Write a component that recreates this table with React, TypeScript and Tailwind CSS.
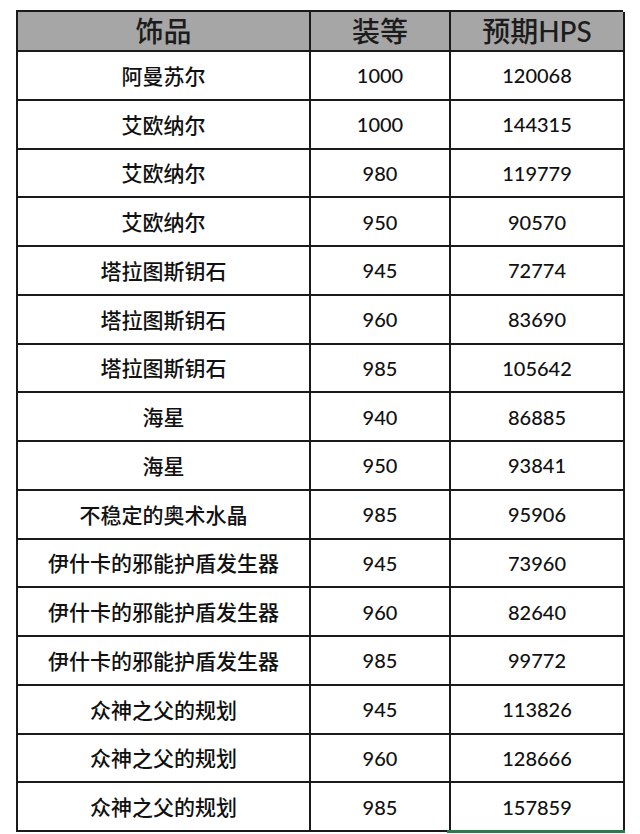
import React from "react";

const ROWS: [string, string, string][] = [
  ["阿曼苏尔", "1000", "120068"],
  ["艾欧纳尔", "1000", "144315"],
  ["艾欧纳尔", "980", "119779"],
  ["艾欧纳尔", "950", "90570"],
  ["塔拉图斯钥石", "945", "72774"],
  ["塔拉图斯钥石", "960", "83690"],
  ["塔拉图斯钥石", "985", "105642"],
  ["海星", "940", "86885"],
  ["海星", "950", "93841"],
  ["不稳定的奥术水晶", "985", "95906"],
  ["伊什卡的邪能护盾发生器", "945", "73960"],
  ["伊什卡的邪能护盾发生器", "960", "82640"],
  ["伊什卡的邪能护盾发生器", "985", "99772"],
  ["众神之父的规划", "945", "113826"],
  ["众神之父的规划", "960", "128666"],
  ["众神之父的规划", "985", "157859"],
];

const font = "font-['Lato','Noto_Sans_CJK_SC',sans-serif]";

export default function App() {
  return (
    <div className={`w-[640px] h-[834px] bg-white pt-[10px] pl-[16px] ${font} text-[#111]`}>
      <div className="relative w-[607px]">
        <div className="grid grid-cols-[293px_140px_174px] border-t-2 border-l-2 border-[#1a1a1a]">
          {["饰品", "装等", "预期HPS"].map(h => (
            <div key={h} className="h-[40px] bg-[#a6a6a6] border-r-2 border-b-2 border-[#1a1a1a] flex items-center justify-center text-[28px] leading-none font-medium text-[#1c1c1c]">
              {h}
            </div>
          ))}
          {ROWS.map((r, i) => (
            <React.Fragment key={i}>
              <div className="h-[48.75px] border-r-2 border-b-2 border-[#1a1a1a] flex items-center justify-center text-[21px] leading-none font-medium">{r[0]}</div>
              <div className="h-[48.75px] border-r-2 border-b-2 border-[#1a1a1a] flex items-center justify-center text-[20px] leading-none font-medium">{r[1]}</div>
              <div className="h-[48.75px] border-r-2 border-b-2 border-[#1a1a1a] flex items-center justify-center text-[20px] leading-none font-medium">{r[2]}</div>
            </React.Fragment>
          ))}
        </div>
        <div className="absolute left-[431px] right-[-2px] bottom-[-1px] h-[3px] bg-[#2a7a4b]" />
      </div>
    </div>
  );
}
